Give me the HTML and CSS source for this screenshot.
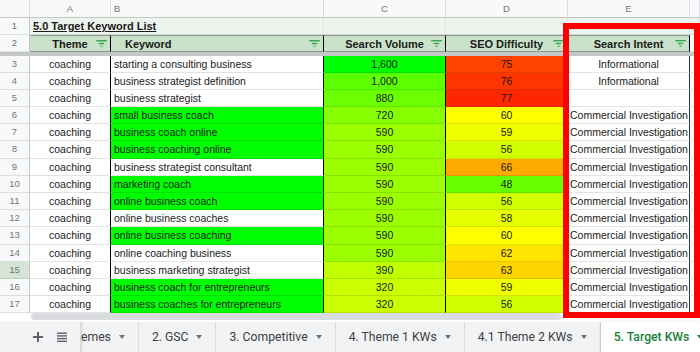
FILE: index.html
```html
<!DOCTYPE html>
<html lang="en">
<head>
<meta charset="UTF-8" />
<meta name="viewport" content="width=device-width, initial-scale=1.0" />
<title>5. Target KWs</title>
<link rel="stylesheet" href="styles.css">
</head>
<body>

<div class="sheet">
  <!-- column letters -->
  <div class="row letters">
    <div class="cell num"></div>
    <div class="cell a">A</div>
    <div class="cell b">B</div>
    <div class="cell c">C</div>
    <div class="cell d">D</div>
    <div class="cell e">E</div>
    <div class="cell f"></div>
  </div>

  <div class="row top">
    <div class="cell num">1</div>
    <div class="cell ab title">5.0 Target Keyword List</div>
    <div class="cell c"></div>
    <div class="cell d"></div>
    <div class="cell e"></div>
    <div class="cell f"></div>
  </div>

  <div class="row top head">
    <div class="cell num">2</div>
    <div class="cell a"><span></span><span>Theme</span><svg class="filter" viewBox="0 0 12 8"><rect x="0" y="0" width="12" height="1.6"/><rect x="3" y="3.2" width="6" height="1.6"/><rect x="5" y="6.4" width="2" height="1.6"/></svg></div>
    <div class="cell b"><span></span><span>Keyword</span><svg class="filter" viewBox="0 0 12 8"><rect x="0" y="0" width="12" height="1.6"/><rect x="3" y="3.2" width="6" height="1.6"/><rect x="5" y="6.4" width="2" height="1.6"/></svg></div>
    <div class="cell c"><span></span><span>Search Volume</span><svg class="filter" viewBox="0 0 12 8"><rect x="0" y="0" width="12" height="1.6"/><rect x="3" y="3.2" width="6" height="1.6"/><rect x="5" y="6.4" width="2" height="1.6"/></svg></div>
    <div class="cell d"><span></span><span>SEO Difficulty</span><svg class="filter" viewBox="0 0 12 8"><rect x="0" y="0" width="12" height="1.6"/><rect x="3" y="3.2" width="6" height="1.6"/><rect x="5" y="6.4" width="2" height="1.6"/></svg></div>
    <div class="cell e"><span></span><span>Search Intent</span><svg class="filter" viewBox="0 0 12 8"><rect x="0" y="0" width="12" height="1.6"/><rect x="3" y="3.2" width="6" height="1.6"/><rect x="5" y="6.4" width="2" height="1.6"/></svg></div>
    <div class="cell f"></div>
  </div>

  <div class="freeze"></div>

  <div class="row">
    <div class="cell num">3</div>
    <div class="cell a">coaching</div>
    <div class="cell b">starting a consulting business</div>
    <div class="cell c" style="background:#00ff00">1,600</div>
    <div class="cell d" style="background:#ff4200">75</div>
    <div class="cell e">Informational</div>
    <div class="cell f"></div>
  </div>
  <div class="row">
    <div class="cell num">4</div>
    <div class="cell a">coaching</div>
    <div class="cell b">business strategist definition</div>
    <div class="cell c" style="background:#5cff00">1,000</div>
    <div class="cell d" style="background:#ff3500">76</div>
    <div class="cell e">Informational</div>
    <div class="cell f"></div>
  </div>
  <div class="row">
    <div class="cell num">5</div>
    <div class="cell a">coaching</div>
    <div class="cell b">business strategist</div>
    <div class="cell c" style="background:#6cff00">880</div>
    <div class="cell d" style="background:#ff2600">77</div>
    <div class="cell e"></div>
    <div class="cell f"></div>
  </div>
  <div class="row">
    <div class="cell num">6</div>
    <div class="cell a">coaching</div>
    <div class="cell b hit">small business coach</div>
    <div class="cell c" style="background:#86ff00">720</div>
    <div class="cell d" style="background:#ffff00">60</div>
    <div class="cell e long">Commercial Investigation</div>
    <div class="cell f"></div>
  </div>
  <div class="row">
    <div class="cell num">7</div>
    <div class="cell a">coaching</div>
    <div class="cell b hit">business coach online</div>
    <div class="cell c" style="background:#9cff00">590</div>
    <div class="cell d" style="background:#f0ff00">59</div>
    <div class="cell e long">Commercial Investigation</div>
    <div class="cell f"></div>
  </div>
  <div class="row">
    <div class="cell num">8</div>
    <div class="cell a">coaching</div>
    <div class="cell b hit">business coaching online</div>
    <div class="cell c" style="background:#9cff00">590</div>
    <div class="cell d" style="background:#d2ff00">56</div>
    <div class="cell e long">Commercial Investigation</div>
    <div class="cell f"></div>
  </div>
  <div class="row">
    <div class="cell num">9</div>
    <div class="cell a">coaching</div>
    <div class="cell b">business strategist consultant</div>
    <div class="cell c" style="background:#9cff00">590</div>
    <div class="cell d" style="background:#ffaa00">66</div>
    <div class="cell e long">Commercial Investigation</div>
    <div class="cell f"></div>
  </div>
  <div class="row">
    <div class="cell num">10</div>
    <div class="cell a">coaching</div>
    <div class="cell b hit">marketing coach</div>
    <div class="cell c" style="background:#9cff00">590</div>
    <div class="cell d" style="background:#66ff00">48</div>
    <div class="cell e long">Commercial Investigation</div>
    <div class="cell f"></div>
  </div>
  <div class="row">
    <div class="cell num">11</div>
    <div class="cell a">coaching</div>
    <div class="cell b hit">online business coach</div>
    <div class="cell c" style="background:#9cff00">590</div>
    <div class="cell d" style="background:#d2ff00">56</div>
    <div class="cell e long">Commercial Investigation</div>
    <div class="cell f"></div>
  </div>
  <div class="row">
    <div class="cell num">12</div>
    <div class="cell a">coaching</div>
    <div class="cell b">online business coaches</div>
    <div class="cell c" style="background:#9cff00">590</div>
    <div class="cell d" style="background:#e8ff00">58</div>
    <div class="cell e long">Commercial Investigation</div>
    <div class="cell f"></div>
  </div>
  <div class="row">
    <div class="cell num">13</div>
    <div class="cell a">coaching</div>
    <div class="cell b hit">online business coaching</div>
    <div class="cell c" style="background:#9cff00">590</div>
    <div class="cell d" style="background:#ffff00">60</div>
    <div class="cell e long">Commercial Investigation</div>
    <div class="cell f"></div>
  </div>
  <div class="row">
    <div class="cell num">14</div>
    <div class="cell a">coaching</div>
    <div class="cell b">online coaching business</div>
    <div class="cell c" style="background:#9cff00">590</div>
    <div class="cell d" style="background:#ffe400">62</div>
    <div class="cell e long">Commercial Investigation</div>
    <div class="cell f"></div>
  </div>
  <div class="row">
    <div class="cell num picked">15</div>
    <div class="cell a">coaching</div>
    <div class="cell b">business marketing strategist</div>
    <div class="cell c" style="background:#bfff00">390</div>
    <div class="cell d" style="background:#ffd500">63</div>
    <div class="cell e long">Commercial Investigation</div>
    <div class="cell f"></div>
  </div>
  <div class="row">
    <div class="cell num">16</div>
    <div class="cell a">coaching</div>
    <div class="cell b hit">business coach for entrepreneurs</div>
    <div class="cell c" style="background:#caff00">320</div>
    <div class="cell d" style="background:#f0ff00">59</div>
    <div class="cell e long">Commercial Investigation</div>
    <div class="cell f"></div>
  </div>
  <div class="row">
    <div class="cell num">17</div>
    <div class="cell a">coaching</div>
    <div class="cell b hit">business coaches for entrepreneurs</div>
    <div class="cell c" style="background:#caff00">320</div>
    <div class="cell d" style="background:#d2ff00">56</div>
    <div class="cell e long">Commercial Investigation</div>
    <div class="cell f"></div>
  </div>
</div>

<div class="hscroll"><div class="thumb"></div></div>

<div class="tabbar">
  <div class="tools">
    <svg class="tool" viewBox="0 0 10 10"><rect x="4" y="0" width="2" height="10"/><rect x="0" y="4" width="10" height="2"/></svg>
    <svg class="tool" viewBox="0 0 10 10"><rect x="0" y="0.5" width="10" height="1.4"/><rect x="0" y="3.2" width="10" height="1.4"/><rect x="0" y="5.9" width="10" height="1.4"/><rect x="0" y="8.6" width="10" height="1.4"/></svg>
  </div>
  <div class="tab cut">emes <i class="caret"></i></div>
  <div class="tab">2. GSC <i class="caret"></i></div>
  <div class="tab">3. Competitive <i class="caret"></i></div>
  <div class="tab">4. Theme 1 KWs <i class="caret"></i></div>
  <div class="tab">4.1 Theme 2 KWs <i class="caret"></i></div>
  <div class="tab active">5. Target KWs <i class="caret"></i></div>
</div>

<!-- highlight drawn over column E -->
<div class="mark"></div>

</body>
</html>
```

FILE: styles.css
```css
body {
  margin: 0;
  width: 700px;
  height: 352px;
  overflow: hidden;
  position: relative;
  background: #fff;
  font-family: "Liberation Sans", Arial, sans-serif;
  font-size: 10.5px;
  color: #1a1a1a;
}

.sheet {
  height: 313px;
  overflow: hidden;
}
.row {
  display: flex;
  height: 17.2px;
}
.cell {
  flex: none;
  box-sizing: border-box;
  height: 100%;
  padding: 0 3px;
  border-right: 1px solid #e2e3e3;
  border-bottom: 1px solid rgba(0, 0, 0, 0.11);
  line-height: 16px;
  white-space: nowrap;
  overflow: hidden;
  text-align: center;
}
.num { width: 30px; background: #f8f9fa; color: #70757a; font-size: 9.5px; border-right-color: #c4c7c5; }
.num.picked { background: #d6e6d6; }
.a { width: 81px; border-right-color: #000; }
.b { width: 213px; border-right-color: #000; text-align: left; }
.c { width: 122px; border-right-color: #000; }
.d { width: 122px; border-right-color: #222; }
.e { width: 122px; border-right-color: #333; }
.f { flex: 1; }
.e.long { text-align: left; padding-left: 2px; }
.hit { background: #00ff00; }

.row.letters { height: 18px; }
.letters .cell {
  background: #f8f9fa;
  color: #70757a;
  font-size: 9.5px;
  line-height: 17px;
  border-right-color: #dadce0;
  border-bottom-color: #c4c7c5;
}

.row.top { height: 17px; }
.top .cell { background: #eef3ee; border-right-color: #dfe5df; }
.top .num { background: #f8f9fa; border-right-color: #c4c7c5; }
.ab { width: 294px; }
.title {
  text-align: left;
  font-weight: bold;
  text-decoration: underline;
  font-size: 11px;
}

.head .cell {
  display: grid;
  grid-template-columns: 12px 1fr 12px;
  align-items: center;
  background: #c9e2c9;
  font-weight: bold;
  font-size: 11px;
  border-top: 1px solid #8a9a8a;
  border-bottom: 1px solid #8a9a8a;
  border-right-color: #000;
  padding: 0 2px;
  line-height: 14px;
}
.head .num { display: block; background: #f8f9fa; font-weight: normal; font-size: 9.5px; border-right-color: #c4c7c5; border-top: 0; border-bottom-color: #e2e3e3; line-height: 16px; }
.head .f { background: #fff; border-top: 0; border-bottom-color: #e2e3e3; }
.filter { width: 11px; height: 7px; fill: #34a853; }

.freeze { height: 3.5px; background: #c4c7c5; }

.hscroll {
  height: 9px;
  padding: 0 0 0 31px;
  box-sizing: border-box;
  background: #fff;
}
.thumb {
  width: 530px;
  height: 7px;
  border-radius: 4px;
  background: #dadce0;
}

.tabbar {
  display: flex;
  height: 30px;
  background: #f1f3f4;
  font-family: Roboto, "Liberation Sans", sans-serif;
  font-size: 12.2px;
  color: #3c4043;
  white-space: nowrap;
}
.tools {
  width: 80px;
  flex: none;
  display: flex;
  align-items: center;
  gap: 14px;
  padding-left: 33px;
  box-sizing: border-box;
  box-shadow: 2px 0 2px rgba(0, 0, 0, 0.12);
}
.tool { width: 10px; height: 10px; fill: #5f6368; }
.tab {
  flex: none;
  display: flex;
  align-items: center;
  gap: 8px;
  padding: 0 13px;
  border-right: 1px solid #dadce0;
}
.tab.cut { padding-left: 1px; }
.caret {
  width: 0;
  height: 0;
  border-left: 3.5px solid transparent;
  border-right: 3.5px solid transparent;
  border-top: 4px solid #70757a;
}
.tab.active {
  flex: 1;
  min-width: 0;
  background: #fff;
  color: #188038;
  font-weight: 500;
  border-right: 0;
  box-shadow: 0 1px 3px rgba(60, 64, 67, 0.3);
}
.tab.active .caret { border-top-color: #188038; }

.mark {
  position: absolute;
  left: 563px;
  top: 23px;
  width: 137px;
  height: 295px;
  box-sizing: border-box;
  border: 6px solid #ff0000;
}
```
